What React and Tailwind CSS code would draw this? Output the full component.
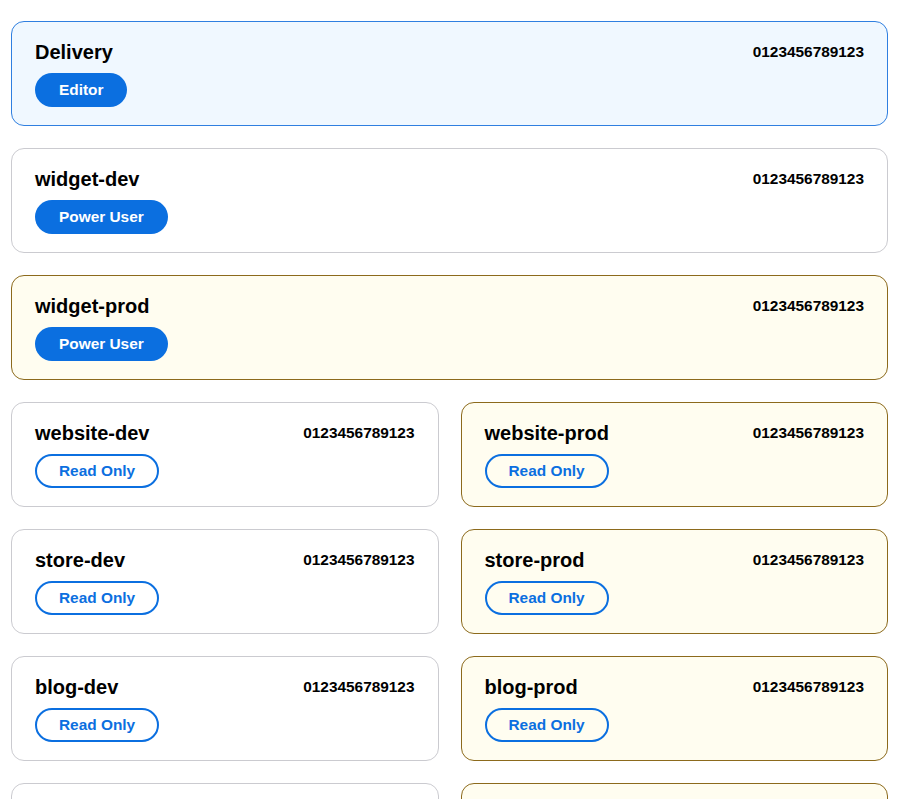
import React from "react";

const font = { fontFamily: '"Liberation Sans", Arial, Helvetica, sans-serif' };

function Badge({ label, outline }) {
  if (outline) {
    return (
      <span className="inline-flex h-[34px] items-center rounded-full border-2 border-[#0b6fe0] bg-transparent px-[22px] text-[15.4px] font-bold text-[#0b6fe0]">
        {label}
      </span>
    );
  }
  return (
    <span className="inline-flex h-[34px] items-center rounded-full bg-[#0b6fe0] px-6 text-[15.4px] font-bold text-white">
      {label}
    </span>
  );
}

function Card({ title, badge, outline, variant }) {
  const styles = {
    blue: "border-[#2f7fe0] bg-[#f0f8ff]",
    prod: "border-[#8c6a1c] bg-[#fffdf0]",
    dev: "border-[#cbcbd0] bg-white",
  };
  return (
    <div className={`flex h-[105px] flex-col rounded-[13px] border px-[23px] pt-[17px] ${styles[variant]}`}>
      <div className="flex items-start justify-between">
        <div className="text-[20px] font-bold leading-[26px] text-black">{title}</div>
        <div className="pt-[4px] text-[15.4px] font-bold leading-[18px] text-black">0123456789123</div>
      </div>
      <div className="mt-[8px]">
        <Badge label={badge} outline={outline} />
      </div>
    </div>
  );
}

export default function App() {
  const pairs = ["website", "store", "blog", "shop"];
  return (
    <div className="min-h-screen bg-white px-[11px] pt-[21px]" style={font}>
      <div className="flex flex-col gap-[22px] w-[877px]">
        <Card title="Delivery" badge="Editor" variant="blue" />
        <Card title="widget-dev" badge="Power User" variant="dev" />
        <Card title="widget-prod" badge="Power User" variant="prod" />
        {pairs.map((p) => (
          <div key={p} className="grid grid-cols-2 gap-[22px]">
            <Card title={`${p}-dev`} badge="Read Only" outline variant="dev" />
            <Card title={`${p}-prod`} badge="Read Only" outline variant="prod" />
          </div>
        ))}
      </div>
    </div>
  );
}
